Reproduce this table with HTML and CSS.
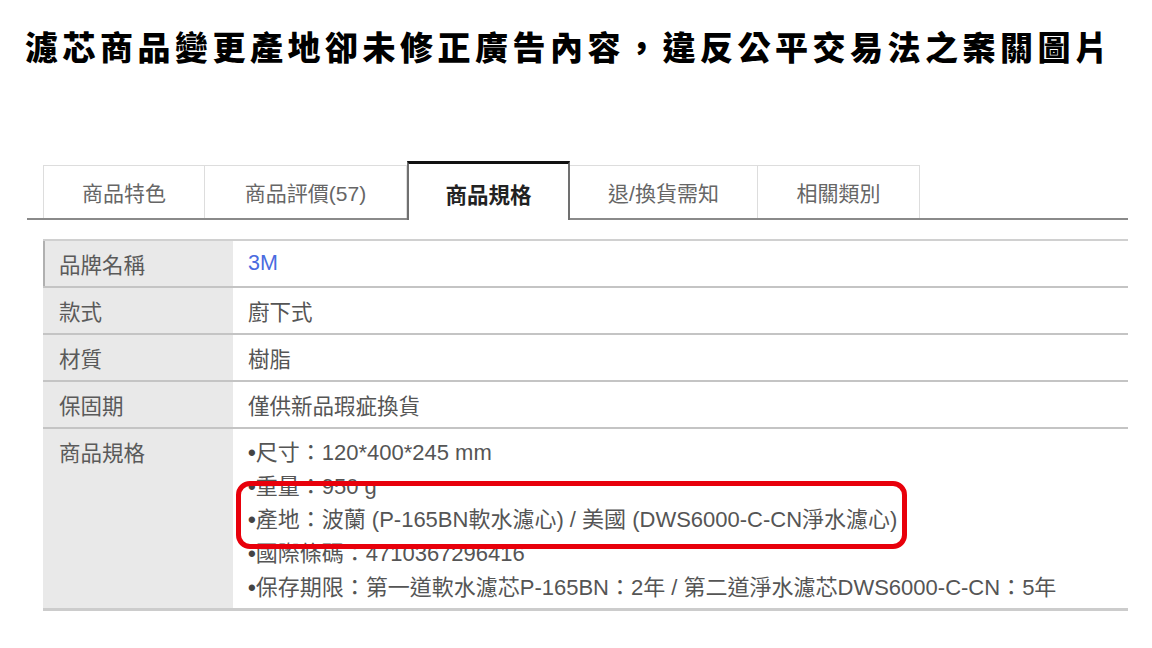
FILE: index.html
```html
<!DOCTYPE html>
<html lang="zh-Hant">
<head>
<meta charset="utf-8">
<title>濾芯商品變更產地卻未修正廣告內容</title>
<link rel="stylesheet" href="styles.css">
</head>
<body>
<h1 class="title">濾芯商品變更產地卻未修正廣告內容，違反公平交易法之案關圖片</h1>
<div class="tabbar">
  <div class="tab">商品特色</div>
  <div class="tab tab-wide">商品評價(57)</div>
  <div class="tab tab-active">商品規格</div>
  <div class="tab tab-mid">退/換貨需知</div>
  <div class="tab">相關類別</div>
</div>
<div class="spec">
  <div class="row">
    <div class="label label-first">品牌名稱</div>
    <div class="value"><span class="link">3M</span></div>
  </div>
  <div class="row">
    <div class="label">款式</div>
    <div class="value">廚下式</div>
  </div>
  <div class="row">
    <div class="label">材質</div>
    <div class="value">樹脂</div>
  </div>
  <div class="row">
    <div class="label">保固期</div>
    <div class="value">僅供新品瑕疵換貨</div>
  </div>
  <div class="row row-tall">
    <div class="label">商品規格</div>
    <div class="value value-list">
      <div class="line"><span class="dot">•</span>尺寸：120*400*245 mm</div>
      <div class="line"><span class="dot">•</span>重量：950 g</div>
      <div class="line"><span class="dot">•</span>產地：波蘭 (P-165BN軟水濾心) / 美國 (DWS6000-C-CN淨水濾心)</div>
      <div class="line"><span class="dot">•</span>國際條碼：4710367296416</div>
      <div class="line"><span class="dot">•</span>保存期限：第一道軟水濾芯P-165BN：2年 / 第二道淨水濾芯DWS6000-C-CN：5年</div>
      <div class="highlight"></div>
    </div>
  </div>
</div>
</body>
</html>
```
FILE: styles.css
```css
html, body {
  margin: 0;
  padding: 0;
  background: #ffffff;
}
body {
  font-family: "Liberation Sans", "Noto Sans CJK TC", sans-serif;
  color: #555555;
  width: 1152px;
  height: 648px;
  overflow: hidden;
}
.title {
  margin: 0;
  padding: 26px 0 0 25px;
  height: 161px;
  box-sizing: border-box;
  font-family: "Noto Sans CJK TC", sans-serif;
  font-weight: 900;
  font-size: 33px;
  line-height: 40px;
  letter-spacing: 4.5px;
  color: #000000;
  white-space: nowrap;
}
.tabbar {
  margin-left: 27px;
  width: 1101px;
  height: 59px;
  box-sizing: border-box;
  padding-left: 16px;
  border-bottom: 2px solid #8a8a8a;
  display: flex;
  align-items: flex-end;
}
.tab {
  width: 162px;
  height: 53px;
  box-sizing: border-box;
  border: 1px solid #dddddd;
  border-bottom: none;
  border-left: none;
  display: flex;
  align-items: center;
  justify-content: center;
  font-size: 21px;
  color: #666666;
  background: #ffffff;
}
.tab:first-child {
  border-left: 1px solid #dddddd;
}
.tab-wide {
  width: 202px;
}
.tab-mid {
  width: 188px;
}
.tab-active {
  width: 163px;
  height: 59px;
  margin-bottom: -2px;
  border-top: 3px solid #111111;
  border-left: 2px solid #707070;
  border-right: 2px solid #707070;
  font-weight: bold;
  font-size: 21.5px;
  color: #222222;
  padding-top: 2px;
}
.spec {
  margin: 19px 0 0 43px;
  width: 1085px;
  border-top: 2px solid #d0d0d0;
}
.row {
  display: grid;
  grid-template-columns: 190px 1fr;
  height: 45px;
  border-bottom: 2px solid #c4c4c4;
  font-size: 21.5px;
}
.row-tall {
  height: 179px;
  border-bottom: 3px solid #cccccc;
}
.label {
  background: #e9e9e9;
  padding-left: 16px;
  display: flex;
  align-items: center;
  color: #5a5a5a;
}
.label-first {
  border-left: 2px solid #b0b0b0;
  padding-left: 14px;
}
.row-tall .label {
  align-items: flex-start;
  padding-top: 7px;
}
.value {
  padding-left: 15px;
  display: flex;
  align-items: center;
  color: #555555;
}
.link {
  color: #4a6be0;
}
.value-list {
  position: relative;
  flex-direction: column;
  align-items: flex-start;
  justify-content: flex-start;
  padding-top: 7px;
  padding-left: 15px;
  font-size: 22px;
}
.line {
  height: 33.7px;
  line-height: 33.7px;
  white-space: nowrap;
}
.dot {
  font-weight: bold;
  color: #444444;
}
.highlight {
  position: absolute;
  left: 3px;
  top: 52px;
  width: 671px;
  height: 68px;
  box-sizing: border-box;
  border: 5px solid #e8000b;
  border-radius: 14px;
}
```
